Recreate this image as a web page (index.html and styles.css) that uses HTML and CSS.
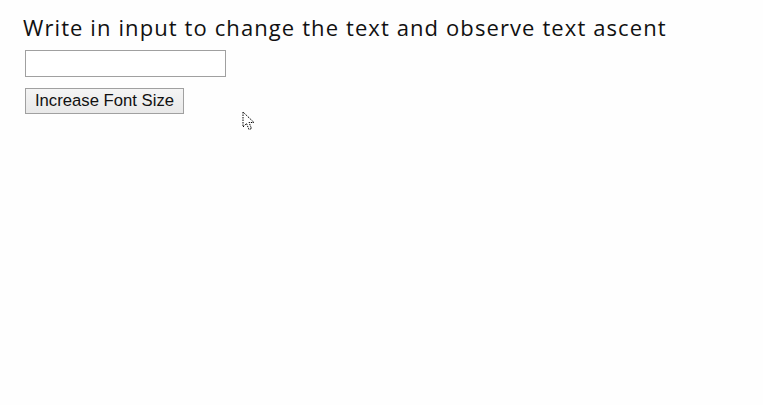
FILE: index.html
```html
<!DOCTYPE html>
<html>
<head>
<meta charset="utf-8">
<link rel="stylesheet" href="styles.css">
</head>
<body>
<div class="page">
  <h1 class="title">Write in input to change the text and observe text ascent</h1>
  <input class="field" type="text">
  <button class="btn">Increase Font Size</button>
</div>
<svg class="cursor" width="14" height="22" viewBox="0 0 14 22">
  <path d="M1 1 L1 16 L4.5 12.5 L7 18.5 L9.5 17.5 L7 11.5 L12 11.5 Z" fill="#fff" stroke="#000" stroke-width="1" stroke-dasharray="1.5 1"/>
</svg>
</body>
</html>
```
FILE: styles.css
```css
html, body { margin: 0; padding: 0; background: #fefefe; }
.page {
  display: flex;
  flex-direction: column;
  align-items: flex-start;
  padding: 12px 0 0 23px;
}
.title {
  margin: 0;
  font-family: "Open Sans", sans-serif;
  font-weight: 400;
  font-size: 22px;
  line-height: 30px;
  color: #111;
  letter-spacing: 1.1px;
}
.field {
  margin: 8px 0 0 2px;
  width: 201px;
  height: 27px;
  box-sizing: border-box;
  border: 1px solid #a0a0a0;
  background: #fff;
  padding: 0;
}
.btn {
  margin: 11px 0 0 2px;
  width: 159px;
  height: 26px;
  box-sizing: border-box;
  border: 1px solid #a0a0a0;
  background: linear-gradient(#f4f4f4, #e8e8e8);
  font-family: "Liberation Sans", Arial, sans-serif;
  font-size: 16.7px;
  color: #111;
  padding: 0;
}
.cursor { position: absolute; left: 242px; top: 111px; }
```
